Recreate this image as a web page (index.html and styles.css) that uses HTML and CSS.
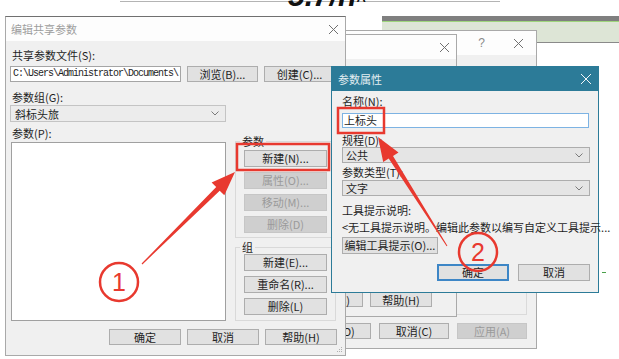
FILE: index.html
```html
<!DOCTYPE html>
<html lang="zh-CN">
<head>
    <meta charset="UTF-8">
    <meta name="viewport" content="width=device-width, initial-scale=1.0">
    <title>编辑共享参数</title>
    <link rel="stylesheet" href="styles.css">
</head>
<body>
<div class="page">
    <div class="top-rule"></div>
    <div class="cutoff">5.7/h<span class="hat">^</span></div>
    <div class="app-strip"></div>
    <div class="green-tick"></div>

    <!-- 后面的两个窗口 -->
    <div class="win win-back">
        <div class="win-title">
            <span></span>
            <span class="title-tools">
                <span class="help">?</span>
                <svg class="close" width="9" height="9" viewBox="0 0 9 9"><path d="M0 0L9 9M9 0L0 9"/></svg>
            </span>
        </div>
        <div class="back-body">
            <div class="ghost-group"></div>
            <div class="btn-row">
                <button class="btn w71">确定(O)</button>
                <button class="btn w71">取消(C)</button>
                <button class="btn w71" disabled>应用(A)</button>
            </div>
        </div>
    </div>

    <div class="win win-mid">
        <div class="win-title">
            <span></span>
            <svg class="close" width="9" height="9" viewBox="0 0 9 9"><path d="M0 0L9 9M9 0L0 9"/></svg>
        </div>
        <div class="mid-body">
            <div class="btn-row">
                <button class="btn w71">选项(S)</button>
                <button class="btn w71">帮助(H)</button>
            </div>
        </div>
    </div>

    <!-- 编辑共享参数 -->
    <div class="win win-share">
        <div class="win-title">
            <span class="title-text">编辑共享参数</span>
            <svg class="close" width="9" height="9" viewBox="0 0 9 9"><path d="M0 0L9 9M9 0L0 9"/></svg>
        </div>
        <div class="share-body">
            <div class="field-label first">共享参数文件(S):</div>
            <div class="path-row">
                <div class="textbox path">C:\Users\Administrator\Documents\:</div>
                <button class="btn w71">浏览(B)...</button>
                <button class="btn w71">创建(C)...</button>
            </div>
            <div class="field-label group-label">参数组(G):</div>
            <div class="combo group-combo">
                <span>斜标头旅</span>
                <svg class="chevron" width="8" height="5" viewBox="0 0 8 5"><path d="M0.5 0.5L4 4L7.5 0.5"/></svg>
            </div>
            <div class="param-area">
                <div>
                    <div class="field-label">参数(P):</div>
                    <div class="listbox"></div>
                </div>
                <div class="side-col">
                    <fieldset class="group group-params">
                        <legend>参数</legend>
                        <button class="btn side">新建(N)...</button>
                        <button class="btn side" disabled>属性(O)...</button>
                        <button class="btn side" disabled>移动(M)...</button>
                        <button class="btn side" disabled>删除(D)</button>
                    </fieldset>
                    <fieldset class="group group-groups">
                        <legend>组</legend>
                        <button class="btn side">新建(E)...</button>
                        <button class="btn side">重命名(R)...</button>
                        <button class="btn side">删除(L)</button>
                    </fieldset>
                </div>
            </div>
            <div class="dialog-buttons">
                <button class="btn w72">确定</button>
                <button class="btn w72">取消</button>
                <button class="btn w72">帮助(H)</button>
            </div>
        </div>
        <svg class="grip" width="6" height="6" viewBox="0 0 6 6">
            <rect x="4" y="0" width="1" height="1"/><rect x="2" y="2" width="1" height="1"/><rect x="4" y="2" width="1" height="1"/>
            <rect x="0" y="4" width="1" height="1"/><rect x="2" y="4" width="1" height="1"/><rect x="4" y="4" width="1" height="1"/>
        </svg>
    </div>

    <!-- 参数属性 -->
    <div class="win win-prop">
        <div class="win-title teal">
            <span class="title-text">参数属性</span>
            <svg class="close" width="10" height="10" viewBox="0 0 10 10"><path d="M0 0L10 10M10 0L0 10"/></svg>
        </div>
        <div class="prop-body">
            <div class="field-label p-name">名称(N):</div>
            <div class="textbox name-box">上标头</div>
            <div class="field-label p-disc">规程(D):</div>
            <div class="combo prop-combo">
                <span>公共</span>
                <svg class="chevron" width="8" height="5" viewBox="0 0 8 5"><path d="M0.5 0.5L4 4L7.5 0.5"/></svg>
            </div>
            <div class="field-label p-type">参数类型(T):</div>
            <div class="combo prop-combo type-combo">
                <span>文字</span>
                <svg class="chevron" width="8" height="5" viewBox="0 0 8 5"><path d="M0.5 0.5L4 4L7.5 0.5"/></svg>
            </div>
            <div class="field-label p-tip">工具提示说明:</div>
            <div class="field-label p-tiptext">&lt;无工具提示说明。编辑此参数以编写自定义工具提示...</div>
            <button class="btn tip-btn">编辑工具提示(O)...</button>
            <div class="prop-buttons">
                <button class="btn w72 default">确定</button>
                <button class="btn w72">取消</button>
            </div>
        </div>
    </div>

    <!-- 标注 -->
    <svg class="marks" width="619" height="359" viewBox="0 0 619 359">
        <rect x="237" y="144" width="92" height="26"/>
        <rect x="338" y="108" width="46" height="25"/>
        <polygon class="fill" points="142.4,264.4 219.7,190.7 224.3,195.3 235,172 211.6,182.5 216.2,187.1 141.6,263.6"/>
        <polygon class="fill" points="447.4,245.7 393,155.9 398.5,152.5 378,137 383.2,162.1 388.7,158.6 446.6,246.3"/>
        <circle cx="119" cy="282" r="19"/>
        <circle cx="478" cy="252" r="19"/>
        <text x="119" y="291">1</text>
        <text x="478" y="261">2</text>
    </svg>
</div>
</body>
</html>
```

FILE: styles.css
```css
body {
    margin: 0;
    background-color: #fff;
    font-family: "Noto Sans CJK SC", sans-serif;
    font-size: 11px;
    color: #1e1e1e;
}
.page {
    position: relative;
    width: 619px;
    height: 359px;
    overflow: hidden;
}

/* 桌面上的碎片 */
.top-rule {
    position: absolute;
    left: 120px;
    top: 1px;
    width: 380px;
    height: 1px;
    background-color: #b4b4b4;
}
.cutoff {
    position: absolute;
    left: 288px;
    top: -19px;
    font-family: "Liberation Sans", sans-serif;
    font-size: 30px;
    line-height: 30px;
    font-weight: bold;
    font-style: italic;
    color: #111;
}
.cutoff .hat {
    font-size: 16px;
    font-style: normal;
}
.app-strip {
    position: absolute;
    left: 382px;
    top: 16px;
    width: 237px;
    height: 27px;
    box-sizing: border-box;
    border-top: 5px solid #7f7f7f;
    border-bottom: 1px solid #8a8a8a;
    background: linear-gradient(#9ed57c 0, #9ed57c 1px, #dde5d6 1px);
}
.green-tick {
    position: absolute;
    left: 602px;
    top: 272px;
    width: 4px;
    height: 1px;
    background-color: #4aa04a;
}

/* 窗口 */
.win {
    position: absolute;
    box-sizing: border-box;
    display: flex;
    flex-direction: column;
    background-color: #f0f0f0;
    border: 1px solid #a9a9a9;
}
.win-back {
    left: 300px;
    top: 30px;
    width: 237px;
    height: 319px;
}
.win-mid {
    left: 300px;
    top: 34px;
    width: 157px;
    height: 283px;
}
.win-share {
    left: 5px;
    top: 16px;
    width: 341px;
    height: 340px;
    border-top-color: #707070;
}
.win-prop {
    left: 331px;
    top: 66px;
    width: 268px;
    height: 227px;
    border-color: #2c7b98;
}
.win-title {
    flex: none;
    height: 24px;
    display: flex;
    align-items: center;
    justify-content: space-between;
    background-color: #fdfdfd;
    padding: 0 7px 0 5px;
    color: #9d9d9d;
}
.win-title.teal {
    background-color: #2c7b98;
    color: #e3eef2;
    padding-left: 6px;
}
.close path {
    stroke: #707070;
    stroke-width: 1;
    fill: none;
}
.teal .close path {
    stroke: #f2f6f8;
}
.win-back .win-title {
    padding-right: 13px;
}
.title-tools {
    display: flex;
    align-items: center;
    gap: 29px;
}
.help {
    font-family: "Liberation Sans", sans-serif;
    font-size: 12px;
    color: #8a8a8a;
}
.grip {
    position: absolute;
    right: 2px;
    bottom: 2px;
}
.grip rect {
    fill: #b0b0b0;
}

/* 按钮 */
.btn {
    box-sizing: border-box;
    height: 17px;
    padding: 0;
    font-family: inherit;
    font-size: 11px;
    line-height: 15px;
    color: #1e1e1e;
    background-color: #e1e1e1;
    border: 1px solid #adadad;
}
.btn:disabled {
    background-color: #cfcfcf;
    border-color: #c6c6c6;
    color: #9a9a9a;
}
.w71 {
    width: 71px;
}
.w72 {
    width: 72px;
}
.btn-row {
    display: flex;
    justify-content: flex-end;
    gap: 8px;
}
.btn-row .btn {
    height: 16px;
}

.back-body {
    flex: 1;
    display: flex;
    flex-direction: column;
    justify-content: flex-end;
    padding: 0 9px 9px 0;
}
.ghost-group {
    height: 180px;
    margin: 0 0 8px 40px;
    border: 1px solid #dadada;
}
.mid-body {
    flex: 1;
    display: flex;
    flex-direction: column;
    justify-content: flex-end;
    padding: 0 24px 9px 0;
}
.mid-body .btn-row {
    gap: 7px;
}
.mid-body .btn {
    height: 15px;
}

/* 编辑共享参数 */
.share-body {
    flex: 1;
    display: flex;
    flex-direction: column;
    padding: 0 8px 0 4px;
}
.field-label {
    line-height: 15px;
    padding-left: 2px;
    white-space: nowrap;
}
.field-label.first {
    margin-top: 7px;
}
.path-row {
    display: flex;
    gap: 6px;
    margin-top: 3px;
}
.path-row .btn {
    height: 16px;
}
.textbox {
    box-sizing: border-box;
    background-color: #fff;
    border: 1px solid #a5a5a5;
    overflow: hidden;
    white-space: nowrap;
}
.path {
    width: 171px;
    height: 16px;
    padding-left: 2px;
    font-family: "Liberation Mono", monospace;
    font-size: 10px;
    line-height: 14px;
    letter-spacing: -1px;
}
.group-label {
    margin-top: 8px;
}
.combo {
    box-sizing: border-box;
    display: flex;
    align-items: center;
    justify-content: space-between;
    padding: 0 6px 0 4px;
    border: 1px solid #c4c4c4;
    background-color: #ececec;
}
.group-combo {
    width: 216px;
    height: 17px;
}
.chevron path {
    stroke: #7a7a7a;
    stroke-width: 1;
    fill: none;
}
.param-area {
    display: grid;
    grid-template-columns: 216px 101px;
    column-gap: 9px;
    margin-top: 4px;
}
.listbox {
    box-sizing: border-box;
    width: 215px;
    height: 179px;
    margin: 1px 0 0 1px;
    background-color: #fff;
    border: 1px solid #a0a0a0;
}
.side-col {
    margin-top: 9px;
}
.group {
    display: flex;
    flex-direction: column;
    gap: 5px;
    margin: 0;
    min-width: 0;
    border: 1px solid #d9d9d9;
}
.group legend {
    margin-left: -4px;
    padding: 0 2px;
    line-height: 12px;
}
.group-params {
    padding: 3px 0 4px 8px;
}
.group-groups {
    margin-top: 3px;
    padding: 1px 0 5px 8px;
}
.btn.side {
    width: 83px;
}
.dialog-buttons {
    display: flex;
    justify-content: flex-end;
    gap: 6px;
    margin-top: 8px;
}
.dialog-buttons .btn {
    height: 16px;
}

/* 参数属性 */
.prop-body {
    flex: 1;
    display: flex;
    flex-direction: column;
    padding: 0 8px 0 10px;
}
.prop-body .field-label {
    line-height: 14px;
    padding-left: 0;
}
.p-name {
    margin-top: 3px;
}
.name-box {
    width: 247px;
    height: 15px;
    margin-top: 5px;
    padding-left: 1px;
    line-height: 13px;
    border-color: #7db3e3;
}
.p-disc {
    margin-top: 5px;
}
.prop-combo {
    height: 16px;
    background-color: #e5e5e5;
    border-color: #adadad;
    padding-left: 3px;
}
.p-type {
    margin-top: 2px;
}
.type-combo {
    margin-top: 1px;
}
.p-tip {
    margin-top: 7px;
}
.p-tiptext {
    margin-top: 3px;
}
.tip-btn {
    width: 96px;
    margin-top: 3px;
}
.prop-buttons {
    display: flex;
    justify-content: flex-end;
    gap: 9px;
    margin-top: 10px;
}
.btn.default {
    border-color: #3d86c6;
    box-shadow: inset 0 0 0 1px #3d86c6;
}

/* 红色标注 */
.marks {
    position: absolute;
    left: 0;
    top: 0;
    pointer-events: none;
}
.marks rect,
.marks circle {
    fill: none;
    stroke: #e8392f;
    stroke-width: 2.5;
}
.marks .fill {
    fill: #e8392f;
}
.marks text {
    fill: #e8392f;
    font-family: "Liberation Sans", sans-serif;
    font-size: 25px;
    text-anchor: middle;
}
```
